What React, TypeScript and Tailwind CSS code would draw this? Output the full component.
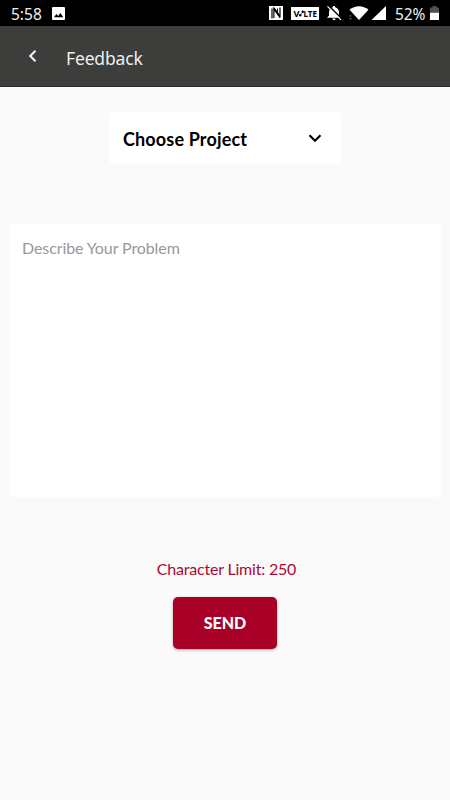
function StatusBar() {
  return (
    <div className="flex h-[26px] items-center bg-black pl-[11px] pr-[11px] font-['Noto_Sans',sans-serif] text-white">
      <span className="w-[41px] pt-px text-[15.5px] leading-[26px] text-[#eeeeee]">5:58</span>
      <svg className="mt-px h-[13px] w-[13px]" viewBox="0 0 13 13">
        <rect width="13" height="13" rx="1" fill="#fff" />
        <path d="M2 10.2 4.4 7l1.7 2L8.4 6l2.9 4.2z" fill="#000" />
      </svg>
      <div className="ml-auto flex items-center">
        <svg className="h-[14px] w-[14px]" viewBox="0 0 14 14">
          <rect width="14" height="14" fill="#fff" />
          <path d="M3 12.500V2.500M11 11.500v-10" stroke="#000" strokeWidth="1.200" />
          <path d="M3.500 1.500h2L11 9v3.500L5.500 5v7H4.300V2.500z" fill="#000" />
          <path d="M8.500 2.500v4.500" stroke="#000" strokeWidth="0.900" />
        </svg>
        <svg className="ml-[8px] mt-px h-[13px] w-[28px]" viewBox="0 0 28 13">
          <rect width="28" height="13" fill="#fff" />
          <text x="2.500" y="9.800" fontFamily="Noto Sans, sans-serif" fontSize="8.500" fontWeight="700" textLength="6" lengthAdjust="spacingAndGlyphs">V</text>
          <path d="m8.500 9 4-4.500" stroke="#000" strokeWidth="0.700" />
          <circle cx="9.200" cy="8.200" r="1.200" fill="#000" />
          <circle cx="11.700" cy="4.800" r="1.200" fill="#000" />
          <text x="12.500" y="9.800" fontFamily="Noto Sans, sans-serif" fontSize="8.500" fontWeight="700" textLength="13.500" lengthAdjust="spacingAndGlyphs">LTE</text>
        </svg>
        <svg className="ml-[7px] h-[16px] w-[17px]" viewBox="0 0 17 16">
          <path d="M8 1c.8 0 1.200.5 1.200 1.200C11.500 2.800 13 4.700 13 7v3.500l2 2.200H1L3 10.500V7c0-2.300 1.500-4.200 3.800-4.800C6.800 1.500 7.200 1 8 1zM6.400 13.600h3.200c0 .9-.7 1.600-1.600 1.600s-1.600-.7-1.600-1.600z" fill="#fff" />
          <path d="M2.500.5 16 14" stroke="#000" strokeWidth="1.500" />
          <path d="M1.500 1.400 15 14.900" stroke="#fff" strokeWidth="1.200" />
        </svg>
        <svg className="ml-[6px] h-[14px] w-[20px]" viewBox="0 0 20 14">
          <path d="M.5 3.800C6-1 14-1 19.500 3.800L10 14z" fill="#fff" />
          <path d="m0 10.500 1.500-2 1.500 2zM0 12l1.500 2L3 12z" fill="#555" />
        </svg>
        <svg className="ml-[2px] h-[14px] w-[16px]" viewBox="0 0 16 14">
          <path d="M15 0v14H.5z" fill="#fff" />
        </svg>
        <span className="ml-[8px] w-[31px] whitespace-nowrap pt-px text-[15.500px] leading-[26px] tracking-[-0.1px] text-[#eeeeee]">52%</span>
        <svg className="ml-[4px] h-[14px] w-[9px]" viewBox="0 0 9 14">
          <path d="M2.500 0h4v1.500H9V7H0V1.500h2.500z" fill="#505050" />
          <path d="M0 6.800h9V14H0z" fill="#fff" />
        </svg>
      </div>
    </div>
  );
}

export default function App() {
  return (
    <div className="flex h-[800px] w-[450px] flex-col overflow-hidden bg-[#fafafa] font-[Lato,sans-serif]">
      <StatusBar />
      <header className="flex h-[61px] items-center border-b border-[#292928] bg-[#3d3d3b] pl-[28px]">
        <button aria-label="Back" className="w-[38px]">
          <svg className="h-[14px] w-[9px]" viewBox="0 0 9 14" fill="none">
            <path d="M7.500 1.700 2.200 7l5.300 5.300" stroke="#f5f5f5" strokeWidth="2" />
          </svg>
        </button>
        <h1 className="pt-[4px] font-['Noto_Sans',sans-serif] text-[17.5px] leading-6 tracking-[-0.15px] text-[#eeeeee]">Feedback</h1>
      </header>
      <main className="flex flex-col items-center">
        <button className="mt-[25px] flex h-[52px] w-[232px] items-center justify-between rounded-[5px] bg-white pl-[14px] pr-[19px] text-black">
          <span className="pt-[2px] text-[18px] font-bold tracking-[0.15px]">Choose Project</span>
          <svg className="h-[9px] w-[14px]" viewBox="0 0 14 9" fill="none">
            <path d="m1.500 1.200 5.500 5.500 5.500-5.500" stroke="#000" strokeWidth="2.100" />
          </svg>
        </button>
        <textarea
          placeholder="Describe Your Problem"
          className="mt-[60px] block h-[273px] w-[432px] resize-none rounded bg-white px-[13px] py-[12px] text-[16px] leading-6 tracking-[-0.1px] outline-none placeholder:text-[#989898]"
        />
        <p className="ml-[3px] mt-[60px] text-[16px] leading-6 tracking-[-0.2px] text-[#a90a35]">Character Limit: 250</p>
        <button className="mt-[16px] h-[52px] w-[104px] rounded-[5px] bg-[#a90028] text-[16px] font-black text-white shadow-[0_1px_3px_rgba(0,0,0,0.35)]">
          SEND
        </button>
      </main>
    </div>
  );
}
